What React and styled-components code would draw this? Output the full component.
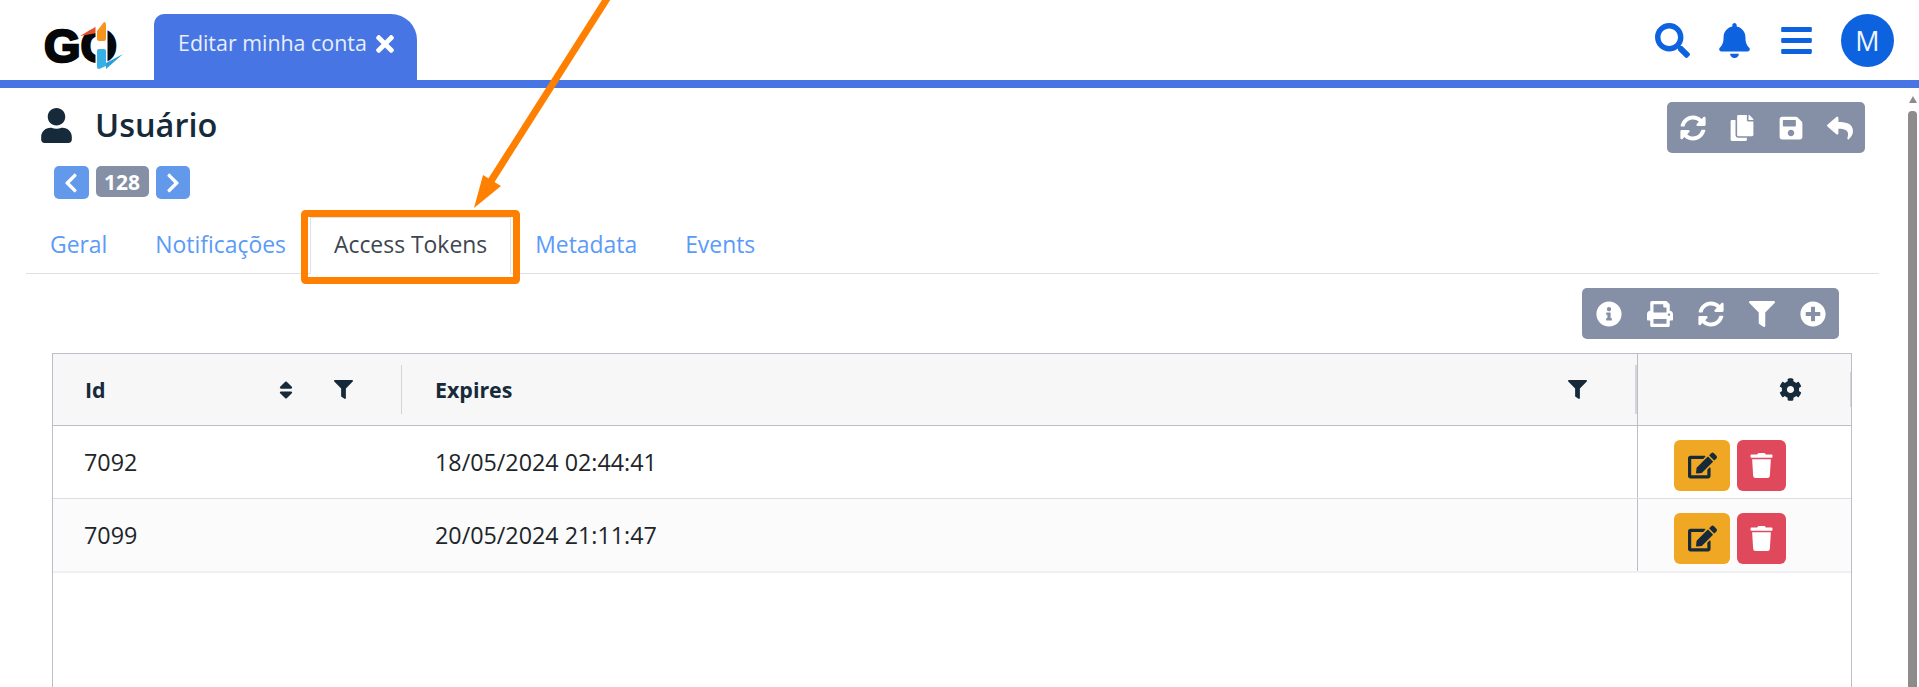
import React from "react";
import styled, { createGlobalStyle } from "styled-components";
import {
  FaSearch, FaBell, FaBars, FaUser, FaSyncAlt, FaCopy, FaSave, FaReply, FaInfoCircle, FaPrint,
  FaFilter, FaPlusCircle, FaEdit, FaTrash, FaCog, FaSort, FaTimes, FaChevronLeft, FaChevronRight,
} from "react-icons/fa";

const Global = createGlobalStyle`
  html, body { margin: 0; padding: 0; height: 687px; overflow: hidden; background: #fff; }
  body { font-family: "Open Sans", "Noto Sans", sans-serif; color: #212529; }
  * { box-sizing: border-box; }
`;

const Page = styled.div`
  position: relative;
  width: 1919px;
  height: 687px;
  display: flex;
  flex-direction: column;
  overflow: hidden;
`;

const Header = styled.header`
  height: 88px;
  flex: none;
  display: flex;
  align-items: flex-end;
  padding: 0 25px 0 45px;
  border-bottom: 8px solid #4775e3;
`;

const LogoBox = styled.svg`
  width: 78px;
  height: 47px;
  align-self: flex-start;
  margin: 22px 31px 0 0;
  overflow: visible;
`;

const LogoText = styled.text`
  font-family: "Liberation Sans", sans-serif;
  font-weight: 700;
  font-size: 47px;
  fill: #050708;
  stroke: #050708;
  stroke-width: 2.4px;
`;

const OpenTab = styled.div`
  width: 263px;
  height: 66px;
  padding: 0 0 10px 24px;
  background: #4775e3;
  border-radius: 10px 26px 0 0;
  color: #e9eefb;
  font-size: 21.4px;
  white-space: nowrap;
  display: flex;
  align-items: center;
  gap: 9px;
  svg { color: #fff; width: 18px; height: 26px; margin-top: 4px; flex: none; }
`;

const HeaderTools = styled.div`
  margin-left: auto;
  align-self: stretch;
  display: flex;
  align-items: center;
  gap: 27px;
  color: #0d62e0;
  svg { display: block; }
`;

const Avatar = styled.div`
  width: 53px;
  height: 53px;
  border-radius: 50%;
  background: #0d62e0;
  color: #f2f6fd;
  font-size: 27px;
  display: flex;
  align-items: center;
  justify-content: center;
`;

const Body = styled.div`
  flex: 1;
  min-height: 0;
  display: flex;
`;

const Main = styled.main`
  width: 1908px;
  flex: none;
  display: flex;
  flex-direction: column;
  padding: 14px 29px 0 26px;
`;

const Scrollbar = styled.div`
  flex: 1;
  padding-right: 2px;
  display: flex;
  flex-direction: column;
  align-items: stretch;
`;

const ScrollArrow = styled.div`
  width: 0;
  height: 0;
  margin: 8px auto 8px;
  border-left: 4.5px solid transparent;
  border-right: 4.5px solid transparent;
  border-bottom: 7px solid #8c8c8c;
`;

const ScrollThumb = styled.div`
  flex: 1;
  margin-bottom: -20px;
  background: #8c8c8c;
  border-radius: 4px;
`;

const TopRow = styled.div`
  display: flex;
  justify-content: space-between;
  align-items: flex-start;
  padding: 0 14px;
`;

const TitleRow = styled.div`
  height: 46px;
  display: flex;
  align-items: center;
  gap: 21px;
  color: #162a3a;
  svg { margin-left: -1px; }
`;

const Title = styled.h1`
  margin: 0;
  font-size: 32.5px;
  font-weight: 600;
  line-height: 1;
`;

const Pager = styled.div`
  margin: 18px 0 0 14px;
  display: flex;
  align-items: flex-start;
  gap: 7px;
`;

const PagerButton = styled.button`
  width: 34.5px;
  height: 33px;
  padding: 0;
  border: 0;
  border-radius: 5px;
  background: #6399eb;
  color: #fff;
  display: flex;
  align-items: center;
  justify-content: center;
`;

const Badge = styled.span`
  width: 53px;
  height: 31px;
  border-radius: 5px;
  background: #8590a6;
  color: #fff;
  font-size: 21px;
  font-weight: 700;
  display: flex;
  align-items: center;
  justify-content: center;
`;

const Toolbar = styled.div`
  display: flex;
  height: 51px;
  padding: 0 1px;
  background: #8590a6;
  border-radius: 5px;
  color: #fff;
  align-self: ${(p) => (p.$end ? "flex-end" : "auto")};
  margin: ${(p) => (p.$end ? "14px 40px 14px 0" : "0")};
`;

const ToolButton = styled.button`
  width: ${(p) => p.$w}px;
  height: 51px;
  padding: 0;
  border: 0;
  background: transparent;
  color: inherit;
  display: flex;
  align-items: center;
  justify-content: center;
`;

const TabBar = styled.nav`
  margin-top: 18px;
  height: 57px;
  flex: none;
  display: flex;
  border-bottom: 1px solid #dfe1e5;
`;

const TabLink = styled.a`
  height: 57px;
  padding: 0 24px 3px;
  display: flex;
  align-items: center;
  font-size: 22.9px;
  color: ${(p) => (p.$active ? "#3d4650" : "#5b9bf8")};
  background: ${(p) => (p.$active ? "#fff" : "transparent")};
  box-shadow: ${(p) => (p.$active ? "inset 1px 1px 0 #dfe1e5, inset -1px 0 0 #dfe1e5" : "none")};
`;

const TabPane = styled.section`
  flex: 1;
  min-height: 0;
  display: flex;
  flex-direction: column;
`;

const TableBox = styled.div`
  flex: 1;
  margin-left: 26px;
  width: 1800px;
  border: 1px solid #bdbdc9;
  border-bottom: 0;
`;

const HeadRow = styled.div`
  display: grid;
  grid-template-columns: 349px 1fr 214px;
  height: 72px;
  background: #f7f7f7;
  border-bottom: 1px solid #bdbdc9;
`;

const HeadCell = styled.div`
  position: relative;
  display: flex;
  align-items: center;
  padding: 0 0 0 ${(p) => p.$pl}px;
  font-size: 21.4px;
  font-weight: 700;
  color: #162a3a;
  border-left: ${(p) => (p.$rule ? "1px solid #bdbdc9" : "0")};
  svg { flex: none; }
`;

const ColumnRule = styled.span`
  position: absolute;
  right: ${(p) => p.$right}px;
  top: ${(p) => p.$top}px;
  bottom: ${(p) => p.$top}px;
  width: ${(p) => p.$w}px;
  background: #d4d5d8;
`;

const HeadLabel = styled.span`
  flex: 1;
  margin-top: -1px;
`;

const SortMark = styled.span`
  margin-right: 37px;
  display: flex;
`;

const FilterMark = styled.span`
  margin-right: ${(p) => p.$mr}px;
  display: flex;
`;

const GearMark = styled.span`
  margin-left: 108px;
  display: flex;
`;

const DataRow = styled.div`
  display: grid;
  grid-template-columns: 349px 1fr 214px;
  height: ${(p) => p.$h}px;
  background: ${(p) => (p.$alt ? "#fbfbfc" : "#fff")};
  border-bottom: ${(p) => (p.$alt ? "2px solid #eef0f4" : "1px solid #dcdee6")};
`;

const DataCell = styled.div`
  display: flex;
  align-items: center;
  padding-left: ${(p) => p.$pl}px;
  font-size: 23.3px;
  color: #212529;
`;

const ActionCell = styled.div`
  display: flex;
  align-items: center;
  gap: 7px;
  padding: 6px 0 0 36px;
  border-left: 1px solid #bdbdc9;
`;

const ActionButton = styled.button`
  width: ${(p) => p.$w}px;
  height: 51px;
  padding: 0;
  border: 0;
  border-radius: 6px;
  background: ${(p) => p.$bg};
  color: ${(p) => p.$fg};
  display: flex;
  align-items: center;
  justify-content: center;
`;

const Annotation = styled.svg`
  position: absolute;
  left: 0;
  top: 0;
  width: 1919px;
  height: 687px;
  pointer-events: none;
`;

const tabs = ["Geral", "Notificações", "Access Tokens", "Metadata", "Events"];
const rows = [
  { id: "7092", exp: "18/05/2024 02:44:41" },
  { id: "7099", exp: "20/05/2024 21:11:47", alt: true },
];

export default function App() {
  return (
    <Page>
      <Global />
      <Header>
        <LogoBox viewBox="45 22 78 47">
          <LogoText x="44" y="62">GO</LogoText>
          <polygon points="80,36 97,26 97,33" fill="#e8502a" />
          <rect x="95.5" y="22" width="12" height="47" fill="#fff" />
          <polygon points="106,63 123,54 106,69" fill="#2a9fd8" />
          <path d="M97 31 L104 22 Q106 22 106 24 V39 Q106 41 104 41 H99 Q97 41 97 39 Z" fill="#f7941e" />
          <path d="M99 49 H104 Q106 49 106 51 V66 L99 69 Q97 69 97 67 V51 Q97 49 99 49 Z" fill="#36b0e6" />
        </LogoBox>
        <OpenTab>
          Editar minha conta
          <FaTimes />
        </OpenTab>
        <HeaderTools>
          <FaSearch size={35} />
          <FaBell size={35} />
          <FaBars size={35} />
          <Avatar>M</Avatar>
        </HeaderTools>
      </Header>
      <Body>
        <Main>
          <TopRow>
            <div>
              <TitleRow>
                <FaUser size={35} />
                <Title>Usuário</Title>
              </TitleRow>
              <Pager>
                <PagerButton><FaChevronLeft size={22} /></PagerButton>
                <Badge>128</Badge>
                <PagerButton><FaChevronRight size={22} /></PagerButton>
              </Pager>
            </div>
            <Toolbar>
              <ToolButton $w={49}><FaSyncAlt size={26} /></ToolButton>
              <ToolButton $w={49}><FaCopy size={26} /></ToolButton>
              <ToolButton $w={49}><FaSave size={26} /></ToolButton>
              <ToolButton $w={49}><FaReply size={26} /></ToolButton>
            </Toolbar>
          </TopRow>
          <TabBar>
            {tabs.map((t) => (
              <TabLink key={t} $active={t === "Access Tokens"}>{t}</TabLink>
            ))}
          </TabBar>
          <TabPane>
            <Toolbar $end>
              <ToolButton $w={51}><FaInfoCircle size={26} /></ToolButton>
              <ToolButton $w={51}><FaPrint size={26} /></ToolButton>
              <ToolButton $w={51}><FaSyncAlt size={26} /></ToolButton>
              <ToolButton $w={51}><FaFilter size={26} /></ToolButton>
              <ToolButton $w={51}><FaPlusCircle size={26} /></ToolButton>
            </Toolbar>
            <TableBox>
              <HeadRow>
                <HeadCell $pl={32}>
                  <HeadLabel>Id</HeadLabel>
                  <SortMark><FaSort size={22} /></SortMark>
                  <FilterMark $mr={49}><FaFilter size={19} /></FilterMark>
                  <ColumnRule $right={0} $top={11} $w={1} />
                </HeadCell>
                <HeadCell $pl={33}>
                  <HeadLabel>Expires</HeadLabel>
                  <FilterMark $mr={50}><FaFilter size={19} /></FilterMark>
                  <ColumnRule $right={0} $top={11} $w={2} />
                </HeadCell>
                <HeadCell $rule $pl={33}>
                  <GearMark><FaCog size={23} /></GearMark>
                  <ColumnRule $right={0} $top={18} $w={1} />
                </HeadCell>
              </HeadRow>
              {rows.map((r) => (
                <DataRow key={r.id} $alt={r.alt} $h={r.alt ? 74 : 73}>
                  <DataCell $pl={31}>{r.id}</DataCell>
                  <DataCell $pl={33}>{r.exp}</DataCell>
                  <ActionCell>
                    <ActionButton $w={56} $bg="#f0a723" $fg="#162a3a"><FaEdit size={29} /></ActionButton>
                    <ActionButton $w={49} $bg="#e0485c" $fg="#fff"><FaTrash size={25} /></ActionButton>
                  </ActionCell>
                </DataRow>
              ))}
            </TableBox>
          </TabPane>
        </Main>
        <Scrollbar>
          <ScrollArrow />
          <ScrollThumb />
        </Scrollbar>
      </Body>
      <Annotation viewBox="0 0 1919 687">
        <rect x="304.5" y="213.5" width="212" height="67" rx="1" fill="none" stroke="#ff8000" strokeWidth="7" strokeLinejoin="round" />
        <line x1="608" y1="-3" x2="491" y2="181" stroke="#ff8000" strokeWidth="7" />
        <polygon points="474,208 483,175 501,186" fill="#ff8000" />
      </Annotation>
    </Page>
  );
}
